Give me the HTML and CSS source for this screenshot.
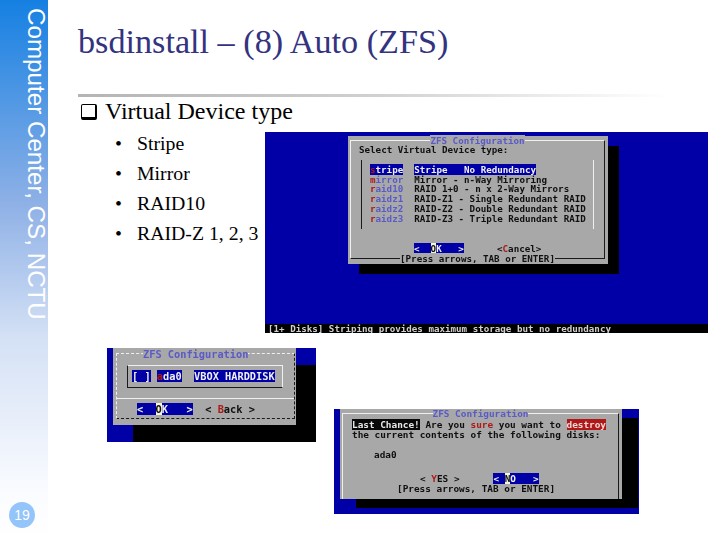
FILE: index.html
```html
<!DOCTYPE html>
<html lang="en">
<head>
    <meta charset="UTF-8">
    <title>bsdinstall - (8) Auto (ZFS)</title>
    <link rel="stylesheet" href="styles.css">
</head>
<body>
    <div class="slide">
        <div class="side">
            <div class="side-title">Computer Center, CS, NCTU</div>
            <div class="page-num">19</div>
        </div>
        <div class="main">
            <h1>bsdinstall – (8) Auto (ZFS)</h1>
            <div class="rule"></div>
            <h2><span class="box-bullet"></span>Virtual Device type</h2>

            <div class="top-row">
                <ul class="types">
                    <li>Stripe</li>
                    <li>Mirror</li>
                    <li>RAID10</li>
                    <li>RAID-Z 1, 2, 3</li>
                </ul>

                <!-- virtual device type dialog -->
                <div class="shot shot-type">
                    <div class="dialog">
                        <div class="frame">
                            <div class="dlg-title"><span>ZFS Configuration</span></div>
                            <div class="line">Select Virtual Device type:</div>
                            <div class="listbox">
                                <div class="line"><span class="sel"><b>s</b>tripe</span>  <span class="sel">Stripe   No Redundancy</span></div>
                                <div class="line"><span class="tag"><b>m</b>irror</span>  Mirror - n-Way Mirroring</div>
                                <div class="line"><span class="tag"><b>r</b>aid10</span>  RAID 1+0 - n x 2-Way Mirrors</div>
                                <div class="line"><span class="tag"><b>r</b>aidz1</span>  RAID-Z1 - Single Redundant RAID</div>
                                <div class="line"><span class="tag"><b>r</b>aidz2</span>  RAID-Z2 - Double Redundant RAID</div>
                                <div class="line"><span class="tag"><b>r</b>aidz3</span>  RAID-Z3 - Triple Redundant RAID</div>
                            </div>
                            <div class="line buttons"><span class="sel">&lt;  <i>O</i>K   &gt;</span>      &lt;<b>C</b>ancel&gt;</div>
                            <div class="dlg-foot"><span>[Press arrows, TAB or ENTER]</span></div>
                        </div>
                    </div>
                    <div class="status line">[1+ Disks] Striping provides maximum storage but no redundancy</div>
                </div>
            </div>

            <div class="bottom-row">
                <!-- disk select dialog -->
                <div class="shot shot-disk">
                    <div class="dialog">
                        <div class="frame">
                            <div class="dlg-title"><span>ZFS Configuration</span></div>
                            <div class="disk-box">
                                <div class="line"><span class="sel">[ ]</span> <span class="sel"><b>a</b>da0</span>  <span class="sel">VBOX HARDDISK</span></div>
                            </div>
                            <div class="line buttons"><span class="sel">&lt;  <i>O</i>K   &gt;</span>  &lt; <b>B</b>ack &gt;</div>
                        </div>
                    </div>
                </div>

                <!-- last chance dialog -->
                <div class="shot shot-confirm">
                    <div class="dialog">
                        <div class="frame">
                            <div class="dlg-title"><span>ZFS Configuration</span></div>
                            <div class="line"><span class="inv">Last Chance!</span> Are you <b>sure</b> you want to <span class="warn">destroy</span></div>
                            <div class="line">the current contents of the following disks:</div>
                            <div class="line disk-name">ada0</div>
                            <div class="line buttons">&lt; <b>Y</b>ES &gt;      <span class="sel">&lt; <i>N</i>O   &gt;</span></div>
                            <div class="line foot-line">[Press arrows, TAB or ENTER]</div>
                        </div>
                    </div>
                </div>
            </div>
        </div>
    </div>
</body>
</html>
```

FILE: styles.css
```css
body {
    margin: 0;
    background-color: white;
    font-family: "Liberation Serif", serif;
    color: black;
}

.slide {
    display: flex;
    width: 720px;
    height: 540px;
    overflow: hidden;
}

/* Left blue band */
.side {
    width: 48px;
    height: 540px;
    flex: none;
    background: linear-gradient(180deg, #1580e2 0%, #8fb1e6 38%, #d3e0f5 62%, #fbfcff 92%, #ffffff 100%);
    display: flex;
    flex-direction: column;
    justify-content: space-between;
}

.side-title {
    writing-mode: vertical-rl;
    font-family: "Liberation Sans", sans-serif;
    font-size: 24.2px;
    line-height: 24px;
    color: white;
    margin: 8px 0 0 12px;
    white-space: nowrap;
}

.page-num {
    width: 26px;
    height: 26px;
    margin: 0 0 12px 9px;
    border-radius: 50%;
    background-color: #93c4fa;
    color: white;
    font-family: "Liberation Sans", sans-serif;
    font-size: 14px;
    line-height: 26px;
    text-align: center;
}

.main {
    flex: 1;
    min-width: 0;
}

h1 {
    margin: 23px 0 0 30px;
    font-size: 34.2px;
    line-height: 37px;
    font-weight: normal;
    color: #333380;
    white-space: nowrap;
}

.rule {
    height: 3px;
    width: 590px;
    margin: 34px 0 0 30px;
    background: linear-gradient(90deg, #b4b4b4 0%, #d0d0d0 50%, #ffffff 100%);
}

h2 {
    display: flex;
    align-items: center;
    margin: 1px 0 0 33px;
    font-size: 24px;
    line-height: 27px;
    font-weight: normal;
}

.box-bullet {
    width: 13px;
    height: 12px;
    margin-right: 8px;
    border: 1px solid black;
    border-right-width: 2px;
    border-bottom-width: 3px;
    border-radius: 2px;
}

.top-row {
    display: flex;
    margin-top: 3px;
}

.types {
    margin: 0;
    padding: 0 0 0 67px;
    width: 217px;
    font-size: 19.8px;
    line-height: 30px;
    box-sizing: border-box;
    list-style: none;
    white-space: nowrap;
}

.types li::before {
    content: "•";
    display: inline-block;
    width: 22px;
}

.bottom-row {
    display: flex;
    align-items: flex-start;
    gap: 18px;
    margin: 15px 0 0 59px;
}

/* Terminal screenshots */
.shot {
    position: relative;
    flex: none;
    overflow: hidden;
    background-color: #0000a6;
    font-family: "DejaVu Sans Mono", monospace;
    font-weight: bold;
    color: #101010;
    filter: blur(0.4px);
}

.line {
    white-space: pre;
}

.line b {
    color: #b01818;
}

.line i {
    font-style: normal;
    color: #101010;
    background-color: #f4f4e0;
}

.sel {
    background-color: #0000a6;
    color: #f0f0f0;
}

.tag {
    color: #5a5ac8;
}

.inv {
    background-color: #080808;
    color: #e8e8e8;
}

.warn {
    background-color: #b01818;
    color: #f0d8d8;
}

.dialog {
    background-color: #a8a8a8;
    box-shadow: 11px 10px 0 #000;
}

.frame {
    position: relative;
    box-sizing: border-box;
    border: 1px solid #1a1a1a;
    border-top-color: #f0f0f0;
    border-left-color: #f0f0f0;
}

.dlg-title {
    position: absolute;
    top: -4px;
    left: 0;
    right: 0;
    text-align: center;
    color: #5a5ac8;
    line-height: 8px;
}

.dlg-foot {
    position: absolute;
    bottom: -5px;
    left: 0;
    right: 0;
    text-align: center;
    line-height: 8px;
    white-space: pre;
}

/* the caption breaks the frame line */
.dlg-title span,
.dlg-foot span {
    background-color: #a8a8a8;
}

/* Virtual device type */
.shot-type {
    width: 443px;
    height: 201px;
    margin-top: 4px;
    font-size: 9.2px;
    line-height: 9.8px;
}

.shot-type .dialog {
    width: 260px;
    height: 128px;
    margin: 4px 0 0 83px;
    padding: 4px 3px 5px 2px;
    box-sizing: border-box;
}

.shot-type .frame {
    height: 119px;
    padding: 4px 0 0 8px;
}

.shot-type .listbox {
    width: 233px;
    height: 69px;
    margin: 5px 0 0 2px;
    padding: 5px 0 0 8px;
    box-sizing: border-box;
    border-left: 1px solid #1a1a1a;
    border-right: 1px solid #f0f0f0;
}

.shot-type .buttons {
    margin: 15px 0 0 55px;
}

.status {
    position: absolute;
    left: 0;
    right: 0;
    bottom: 0;
    height: 9px;
    padding-left: 3px;
    background-color: #000;
    color: #d0d0d0;
    line-height: 9px;
}

/* Disk select */
.shot-disk {
    width: 209px;
    height: 94px;
    font-size: 10.3px;
    line-height: 11px;
}

.shot-disk .dialog {
    width: 183px;
    height: 77px;
    margin-left: 6px;
    padding: 5px 1px 6px 3px;
    box-sizing: border-box;
    box-shadow: 20px 17px 0 #000;
}

.shot-disk .frame {
    height: 66px;
    padding-top: 11px;
    border-style: dashed;
}

.shot-disk .dlg-title {
    text-align: left;
    padding-left: 26px;
}

.shot-disk .disk-box {
    width: 156px;
    height: 23px;
    margin-left: 10px;
    padding: 5px 0 0 4px;
    box-sizing: border-box;
    border: 1px solid #f0f0f0;
    border-left-color: #1a1a1a;
    border-bottom-color: #1a1a1a;
}

.shot-disk .buttons {
    margin-top: 10px;
    padding: 5px 0 0 20px;
    border-top: 1px solid #f0f0f0;
}

/* Last chance */
.shot-confirm {
    width: 305px;
    height: 105px;
    margin-top: 61px;
    font-size: 9.4px;
    line-height: 10px;
}

.shot-confirm .dialog {
    width: 282px;
    height: 90px;
    margin-left: 6px;
    padding: 4px 3px 0 2px;
    box-sizing: border-box;
    box-shadow: 16px 9px 0 #000;
}

.shot-confirm .frame {
    height: 86px;
    padding: 6px 0 0 9px;
    border-bottom: 0;
}

.shot-confirm .disk-name {
    margin: 10px 0 0 22px;
}

.shot-confirm .buttons {
    margin: 14px 0 0 68px;
}

.shot-confirm .foot-line {
    margin-left: 45px;
}
```
